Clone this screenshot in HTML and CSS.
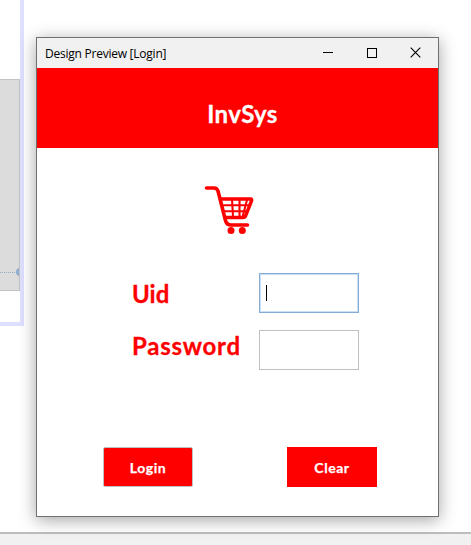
FILE: index.html
```html
<!DOCTYPE html>
<html lang="en">
<head>
<meta charset="utf-8">
<title>Design Preview [Login]</title>
<link rel="stylesheet" href="styles.css">
</head>
<body>
<div class="editor">
  <div class="canvas">
    <div class="panel"><div class="guide"><span class="anchor"></span></div></div>
  </div>
</div>
<div class="statusbar"></div>
<main class="window">
  <div class="titlebar">
    <span class="caption">Design Preview [Login]</span>
    <svg class="controls" width="132" height="30" viewBox="0 0 132 30">
      <path d="M16 14.5H26M60.500 10.500H69.500V19.500H60.500Z" fill="none" stroke="#000" shape-rendering="crispEdges"/>
      <path d="M103.700 9.700L113.300 19.300M113.300 9.700L103.700 19.300" fill="none" stroke="#000" stroke-width="1.1"/>
    </svg>
  </div>
  <header class="header"><h1 class="brand">InvSys</h1></header>
  <form class="form">
    <svg class="cart" width="50" height="50" viewBox="0 0 50 50">
      <g fill="none" stroke="#f00" stroke-linecap="round" stroke-linejoin="round">
        <path d="M2.500 4H10Q13 4 14 7L21.500 36.500Q22.700 41 27 41H43.500" stroke-width="3.600"/>
        <path d="M17 15H46.500Q48.300 15 47.500 17L41.500 32Q41 33.500 39 33.500H21" stroke-width="3.400"/>
        <path d="M18.500 21.200H45M20 27.300H42.500M28 15L29 33M35.500 15V33M43 16L38.500 33" stroke-width="2.100"/>
      </g>
      <circle cx="27" cy="46.500" r="3.500" fill="#f00"/>
      <circle cx="38.300" cy="46.500" r="3.500" fill="#f00"/>
    </svg>
    <div class="fields">
      <label class="label uid">Uid</label>
      <div class="input focused"><span class="caret"></span></div>
      <label class="label password">Password</label>
      <div class="input"></div>
    </div>
    <div class="actions">
      <button type="button" class="button login">Login</button>
      <button type="button" class="button clear">Clear</button>
    </div>
  </form>
</main>
</body>
</html>
```
FILE: styles.css
```css
* { box-sizing: border-box; }
body {
  margin: 0;
  height: 545px;
  overflow: hidden;
  display: flex;
  flex-direction: column;
  position: relative;
  background: #fff;
  font-family: Lato, sans-serif;
}
.editor { height: 532px; }
.canvas {
  width: 24px;
  height: 326px;
  padding-top: 79px;
  border-right: 4px solid #dfdfff;
  border-bottom: 4px solid #dfdfff;
}
.panel {
  height: 212px;
  padding-top: 188px;
  overflow: hidden;
  background: #dcdcdc;
  border: 1px solid #c3c3c3;
  border-left: 0;
}
.guide {
  display: flex;
  align-items: center;
  justify-content: flex-end;
  height: 8px;
  margin-right: -5px;
  background: repeating-linear-gradient(90deg, #8eabc3 0 1px, transparent 1px 2px) 0 4px / 100% 1px no-repeat;
}
.anchor { width: 8px; height: 8px; border-radius: 50%; background: #8eafcd; }
.statusbar { height: 13px; background: #f1f1f1; border-top: 2px solid #bdbdbd; }
.window {
  position: absolute;
  left: 36px;
  top: 37px;
  width: 403px;
  height: 480px;
  border: 1px solid #707070;
  background: #fff;
  box-shadow: 0 3px 16px rgba(0, 0, 0, .36);
}
.titlebar {
  display: flex;
  justify-content: space-between;
  height: 30px;
  padding-left: 8px;
  background: #f1f1f1;
}
.caption {
  font: 12px/31px "Open Sans", sans-serif;
  letter-spacing: -.24px;
  color: #000;
}
.controls { margin-right: -1px; }
.header {
  display: flex;
  align-items: center;
  justify-content: center;
  height: 80px;
  padding: 12px 0 0 10px;
  background: #f00;
}
.brand { margin: 0; font-size: 24px; line-height: 30px; letter-spacing: .35px; color: #fff; -webkit-text-stroke: .3px; }
.form { display: flex; flex-direction: column; height: 368px; }
.cart { margin: 36px 0 0 167px; }
.fields {
  display: grid;
  grid-template-columns: 127px 100px;
  grid-template-rows: 40px 40px;
  row-gap: 17px;
  margin: 39px 0 0 95px;
}
.label { font-size: 24px; font-weight: 700; line-height: 42px; color: #f00; -webkit-text-stroke: .3px; }
.password { line-height: 32px; letter-spacing: .75px; }
.input { display: flex; padding: 11px 6px; border: 1px solid #c0c0c0; background: #fff; }
.focused { border-color: #84acd4; box-shadow: inset 0 0 0 1px #cadff6; }
.caret { width: 1px; height: 16px; background: #000; }
.actions { display: flex; gap: 94px; margin: 77px 0 0 66px; }
.button {
  width: 90px;
  height: 40px;
  padding: 2px 0 0;
  border: 0;
  background: #f00;
  color: #fff;
  font: 700 14px/18px Lato, sans-serif;
  letter-spacing: .55px;
  -webkit-text-stroke: .25px;
}
.login { border: 1px solid #c0c0c0; border-radius: 2px; }
```
